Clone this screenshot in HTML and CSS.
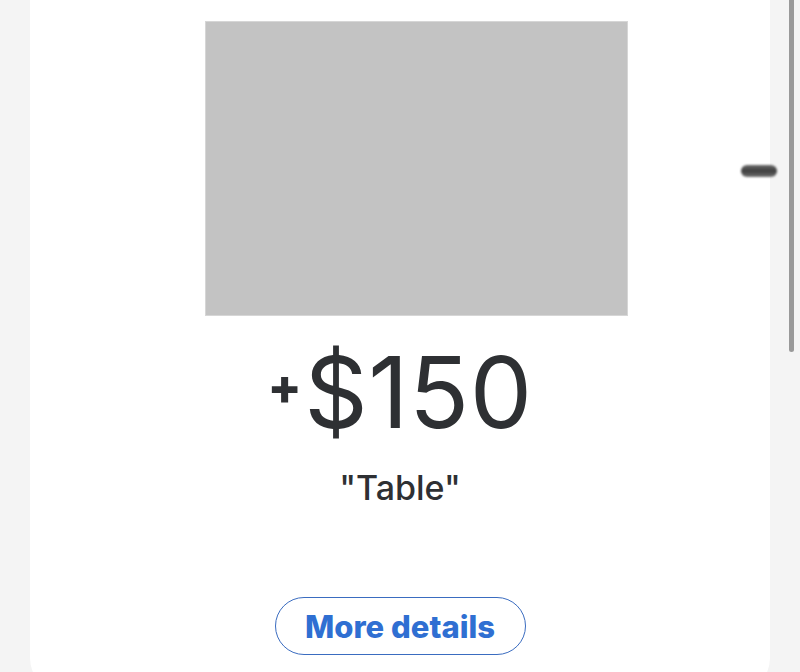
FILE: index.html
```html
<!DOCTYPE html>
<html>
<head>
<meta charset="utf-8">
<link rel="stylesheet" href="styles.css">
</head>
<body>
<div class="card">
  <div class="photo"></div>
  <div class="amount"><span class="plus">+</span>$150</div>
  <div class="label">"Table"</div>
  <button class="details">More details</button>
</div>
<div class="grabber"></div>
<div class="scrollbar"></div>
</body>
</html>
```
FILE: styles.css
```css
html, body {
  margin: 0;
  padding: 0;
  height: 672px;
  overflow: hidden;
  background: #f4f4f4;
  font-family: Inter, "Noto Sans", sans-serif;
}
.card {
  margin: -40px 0 0 30px;
  width: 740px;
  height: 734px;
  background: #ffffff;
  border-radius: 36px;
  box-sizing: border-box;
  padding-top: 61px;
  display: flex;
  flex-direction: column;
  align-items: center;
}
.photo {
  align-self: flex-start;
  margin-left: 175px;
  width: 423px;
  height: 295px;
  background: #c3c3c3;
  box-sizing: border-box;
  border: 1px solid #d6d6d6;
}
.amount {
  margin-top: 10px;
  font-size: 99px;
  line-height: 120px;
  color: #2e3033;
  font-weight: 400;
  letter-spacing: 0.5px;
}
.plus {
  font-size: 50px;
  font-weight: 800;
  vertical-align: 24px;
  margin-right: 2px;
}
.label {
  margin-top: 14px;
  font-size: 34px;
  line-height: 44px;
  color: #2e3033;
  font-weight: 500;
}
.details {
  margin-top: 87px;
  width: 251px;
  height: 58px;
  border: 1.5px solid #3a6cc0;
  border-radius: 29px;
  background: #fff;
  color: #2f6fd2;
  font-family: Inter, "Noto Sans", sans-serif;
  font-weight: 800;
  font-size: 31px;
  padding: 0;
}
.grabber {
  position: absolute;
  left: 741px;
  top: 165px;
  width: 36px;
  height: 12px;
  border-radius: 6px;
  background: linear-gradient(#6a6a6a, #3e3e3e 50%, #707070);
  filter: blur(0.8px);
}
.scrollbar {
  position: absolute;
  left: 789px;
  top: 0;
  width: 5px;
  height: 352px;
  background: #999999;
  border-radius: 0 0 3px 3px;
}
```
